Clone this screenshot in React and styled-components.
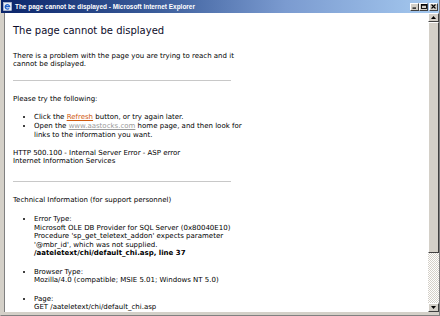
import React from "react";
import styled, { createGlobalStyle } from "styled-components";

const Global = createGlobalStyle`
  html, body { margin: 0; padding: 0; background: #fff; }
  #root { width: 440px; height: 316px; overflow: hidden; }
`;

const Win = styled.div`
  width: 440px;
  height: 316px;
  box-sizing: border-box;
  background: #d4d0c8;
  display: flex;
  flex-direction: column;
  border-left: 1px solid #d4d0c8;
  border-right: 1px solid #808080;
  border-bottom: 1px solid #808080;
  font-family: "DejaVu Sans", Verdana, sans-serif;
`;

const TitleBar = styled.div`
  height: 13px;
  flex: none;
  display: flex;
  align-items: center;
  padding: 0 1px 0 2px;
  background: linear-gradient(to right, #0a246a 0%, #3a5c9a 35%, #7b9bd0 65%, #a6caf0 100%);
  color: #fff;
  font-family: "Liberation Sans", Tahoma, sans-serif;
  font-weight: bold;
  font-size: 6.45px;
  white-space: nowrap;
`;

const TitleText = styled.span`
  margin-left: 3px;
  flex: 1;
`;

const Buttons = styled.div`
  display: flex;
`;

const CapBtn = styled.div`
  width: 9px;
  height: 8px;
  margin-left: ${(p) => (p.$gap ? "1px" : "0")};
  box-sizing: border-box;
  background: #d4d0c8;
  border-top: 1px solid #fff;
  border-left: 1px solid #fff;
  border-right: 1px solid #404040;
  border-bottom: 1px solid #404040;
  display: flex;
  align-items: center;
  justify-content: center;
`;

const Body = styled.div`
  flex: 1;
  display: flex;
  min-height: 0;
  border-left: 3px solid #d4d0c8;
  border-bottom: 3px solid #d4d0c8;
`;

const Page = styled.div`
  flex: 1;
  background: #fff;
  overflow: hidden;
  padding: 12px 0 0 8px;
  color: #000;
  font-size: 7px;
  line-height: 8.5px;
  border-left: 1px solid #808080;
`;

const Column = styled.div`
  width: 226px;
`;

const Heading = styled.h1`
  margin: 0;
  font-weight: normal;
  font-size: 10px;
  line-height: 12px;
  color: #0c0c2a;
`;

const Para = styled.p`
  margin: ${(p) => p.$top}px 0 0 0;
`;

const Rule = styled.div`
  margin-top: ${(p) => p.$top}px;
  width: 218px;
  height: 1px;
  background: #c8c8c8;
`;

const List = styled.ul`
  margin: ${(p) => p.$top}px 0 0 0;
  padding: 0 0 0 21px;
  list-style: disc;
`;

const Item = styled.li`
  margin-bottom: ${(p) => p.$after || 0}px;
`;

const Line = styled.span`
  white-space: nowrap;
`;

const Link = styled.span`
  color: ${(p) => p.$color};
  text-decoration: underline;
`;

const Strong = styled.b`
  font-weight: bold;
`;

const Scroll = styled.div`
  width: 11px;
  flex: none;
  display: flex;
  flex-direction: column;
  background-color: #f4f3ef;
  background-image: conic-gradient(#d4d0c8 25%, #fff 0 50%, #d4d0c8 0 75%, #fff 0);
  background-size: 2px 2px;
`;

const Arrow = styled.div`
  height: 9px;
  flex: none;
  box-sizing: border-box;
  background: #d4d0c8;
  border-top: 1px solid #fff;
  border-left: 1px solid #fff;
  border-right: 1px solid #404040;
  border-bottom: 1px solid #404040;
  display: flex;
  align-items: center;
  justify-content: center;
`;

const Thumb = styled.div`
  height: 231px;
  flex: none;
  box-sizing: border-box;
  background: #d4d0c8;
  border-top: 1px solid #fff;
  border-left: 1px solid #fff;
  border-right: 1px solid #404040;
  border-bottom: 1px solid #404040;
`;

const Track = styled.div`
  flex: 1;
`;

const Tri = ({ up }) => (
  <svg width="5" height="3" viewBox="0 0 5 3">
    <polygon points={up ? "2.5,0 5,3 0,3" : "0,0 5,0 2.5,3"} fill="#000" />
  </svg>
);

const IeIcon = () => (
  <svg width="9" height="9" viewBox="0 0 9 9">
    <rect x="0.5" y="0.5" width="8" height="8" fill="#e8eef8" stroke="#c0c8d8" strokeWidth="0.6" />
    <path d="M2.2 4.6 H6.6 A2.2 2.2 0 1 0 6.1 6.3" fill="none" stroke="#1f5fc8" strokeWidth="1.3" />
  </svg>
);

export default function App() {
  return (
    <>
      <Global />
      <Win>
        <TitleBar>
          <IeIcon />
          <TitleText>The page cannot be displayed - Microsoft Internet Explorer</TitleText>
          <Buttons>
            <CapBtn>
              <svg width="5" height="5" viewBox="0 0 5 5"><rect x="0.5" y="3.5" width="3.5" height="1.2" fill="#000" /></svg>
            </CapBtn>
            <CapBtn>
              <svg width="6" height="5" viewBox="0 0 6 5"><rect x="0.5" y="0.5" width="5" height="4" fill="none" stroke="#000" strokeWidth="0.9" /><rect x="0.5" y="0.5" width="5" height="1.2" fill="#000" /></svg>
            </CapBtn>
            <CapBtn $gap>
              <svg width="5" height="5" viewBox="0 0 5 5"><path d="M0.5 0.5 L4.5 4.5 M4.5 0.5 L0.5 4.5" stroke="#000" strokeWidth="1.1" /></svg>
            </CapBtn>
          </Buttons>
        </TitleBar>
        <Body>
          <Page>
            <Column>
              <Heading>The page cannot be displayed</Heading>
              <Para $top={14.75}>
                There is a problem with the page you are trying to reach and it cannot be displayed.
              </Para>
              <Rule $top={11.25} />
              <Para $top={13.75}>Please try the following:</Para>
              <List $top={10}>
                <Item $after={0.5}>
                  Click the <Link $color="#d05a10">Refresh</Link> button, or try again later.
                </Item>
                <Item>
                  <Line>
                    Open the <Link $color="#9a9a9a">www.aastocks.com</Link> home page, and then look for
                  </Line>
                  <br />
                  links to the information you want.
                </Item>
              </List>
              <Para $top={9.5}>
                HTTP 500.100 - Internal Server Error - ASP error
                <br />
                Internet Information Services
              </Para>
              <Rule $top={15.25} />
              <Para $top={14.25}>Technical Information (for support personnel)</Para>
              <List $top={10.5}>
                <Item $after={10}>
                  Error Type:
                  <br />
                  Microsoft OLE DB Provider for SQL Server (0x80040E10)
                  <br />
                  Procedure 'sp_get_teletext_addon' expects parameter '@mbr_id', which was not supplied.
                  <br />
                  <Strong>/aateletext/chi/default_chi.asp, line 37</Strong>
                </Item>
                <Item $after={10}>
                  Browser Type:
                  <br />
                  Mozilla/4.0 (compatible; MSIE 5.01; Windows NT 5.0)
                </Item>
                <Item>
                  Page:
                  <br />
                  GET /aateletext/chi/default_chi.asp
                </Item>
              </List>
            </Column>
          </Page>
          <Scroll>
            <Arrow><Tri up /></Arrow>
            <Thumb />
            <Track />
            <Arrow><Tri /></Arrow>
          </Scroll>
        </Body>
      </Win>
    </>
  );
}
